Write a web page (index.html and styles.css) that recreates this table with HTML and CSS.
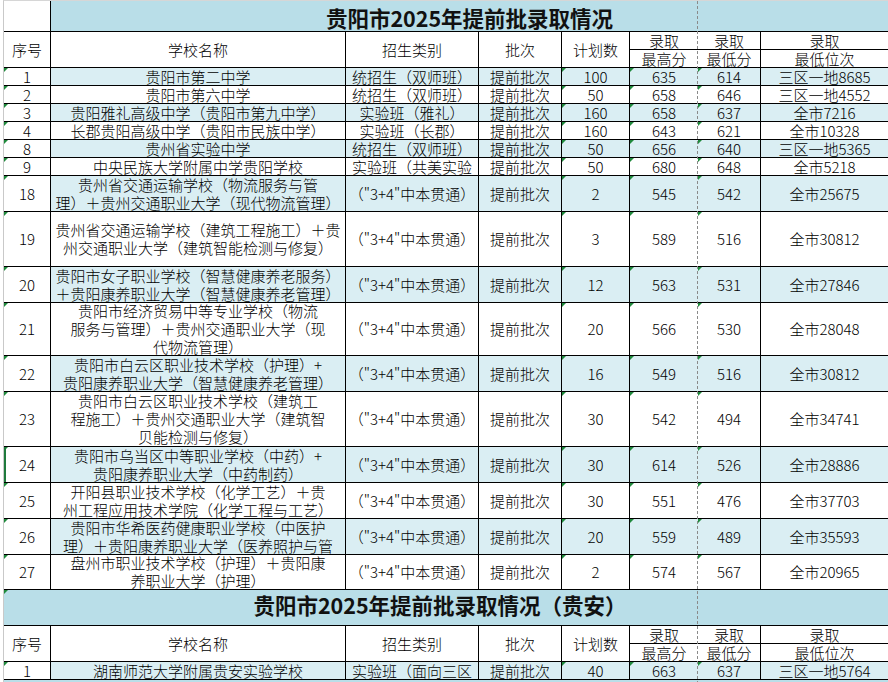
FILE: index.html
```html
<!DOCTYPE html>
<html lang="zh-CN">
<head>
<meta charset="utf-8">
<title>贵阳市2025年提前批录取情况</title>
<link rel="stylesheet" href="styles.css">
</head>
<body>
<div class="sheet">
  <div class="row">
    <div class="c n"></div>
    <div class="c title t1">贵阳市2025年提前批录取情况</div>
  </div>
  <div class="row">
    <div class="c n h2">序号</div>
    <div class="c h2">学校名称</div>
    <div class="c h2">招生类别</div>
    <div class="c h2">批次</div>
    <div class="c h2">计划数</div>
    <div class="c nr">录取</div>
    <div class="c">录取</div>
    <div class="c nr">录取</div>
    <div class="c nr">最高分</div>
    <div class="c">最低分</div>
    <div class="c nr">最低位次</div>
  </div>

  <div class="row z">
    <div class="c n t">1</div><div class="c">贵阳市第二中学</div><div class="c">统招生（双师班）</div><div class="c">提前批次</div>
    <div class="c t">100</div><div class="c t nr">635</div><div class="c t">614</div><div class="c nr">三区一地8685</div>
  </div>
  <div class="row">
    <div class="c n t">2</div><div class="c">贵阳市第六中学</div><div class="c">统招生（双师班）</div><div class="c">提前批次</div>
    <div class="c t">50</div><div class="c t nr">658</div><div class="c t">646</div><div class="c nr">三区一地4552</div>
  </div>
  <div class="row z">
    <div class="c n t">3</div><div class="c">贵阳雅礼高级中学（贵阳市第九中学）</div><div class="c">实验班（雅礼）</div><div class="c">提前批次</div>
    <div class="c t">160</div><div class="c t nr">658</div><div class="c t">637</div><div class="c nr">全市7216</div>
  </div>
  <div class="row">
    <div class="c n t">4</div><div class="c">长郡贵阳高级中学（贵阳市民族中学）</div><div class="c">实验班（长郡）</div><div class="c">提前批次</div>
    <div class="c t">160</div><div class="c t nr">643</div><div class="c t">621</div><div class="c nr">全市10328</div>
  </div>
  <div class="row z">
    <div class="c n t">8</div><div class="c">贵州省实验中学</div><div class="c">统招生（双师班）</div><div class="c">提前批次</div>
    <div class="c t">50</div><div class="c t nr">656</div><div class="c t">640</div><div class="c nr">三区一地5365</div>
  </div>
  <div class="row">
    <div class="c n t">9</div><div class="c">中央民族大学附属中学贵阳学校</div><div class="c">实验班（共美实验</div><div class="c">提前批次</div>
    <div class="c t">50</div><div class="c t nr">680</div><div class="c t">648</div><div class="c nr">全市5218</div>
  </div>
  <div class="row z">
    <div class="c n t">18</div><div class="c"><span>贵州省交通运输学校（物流服务与管<br>理）＋贵州交通职业大学（现代物流管理）</span></div><div class="c">（"3+4"中本贯通）</div><div class="c">提前批次</div>
    <div class="c t">2</div><div class="c t nr">545</div><div class="c t">542</div><div class="c nr">全市25675</div>
  </div>
  <div class="row">
    <div class="c n t">19</div><div class="c"><span>贵州省交通运输学校（建筑工程施工）＋贵<br>州交通职业大学（建筑智能检测与修复）</span></div><div class="c">（"3+4"中本贯通）</div><div class="c">提前批次</div>
    <div class="c t">3</div><div class="c t nr">589</div><div class="c t">516</div><div class="c nr">全市30812</div>
  </div>
  <div class="row z">
    <div class="c n t">20</div><div class="c"><span>贵阳市女子职业学校（智慧健康养老服务）<br>＋贵阳康养职业大学（智慧健康养老管理）</span></div><div class="c">（"3+4"中本贯通）</div><div class="c">提前批次</div>
    <div class="c t">12</div><div class="c t nr">563</div><div class="c t">531</div><div class="c nr">全市27846</div>
  </div>
  <div class="row">
    <div class="c n t">21</div><div class="c"><span>贵阳市经济贸易中等专业学校（物流<br>服务与管理）＋贵州交通职业大学（现<br>代物流管理）</span></div><div class="c">（"3+4"中本贯通）</div><div class="c">提前批次</div>
    <div class="c t">20</div><div class="c t nr">566</div><div class="c t">530</div><div class="c nr">全市28048</div>
  </div>
  <div class="row z">
    <div class="c n t">22</div><div class="c"><span>贵阳市白云区职业技术学校（护理）+<br>贵阳康养职业大学（智慧健康养老管理）</span></div><div class="c">（"3+4"中本贯通）</div><div class="c">提前批次</div>
    <div class="c t">16</div><div class="c t nr">549</div><div class="c t">516</div><div class="c nr">全市30812</div>
  </div>
  <div class="row">
    <div class="c n t">23</div><div class="c"><span>贵阳市白云区职业技术学校（建筑工<br>程施工）＋贵州交通职业大学（建筑智<br>贝能检测与修复）</span></div><div class="c">（"3+4"中本贯通）</div><div class="c">提前批次</div>
    <div class="c t">30</div><div class="c t nr">542</div><div class="c t">494</div><div class="c nr">全市34741</div>
  </div>
  <div class="row z">
    <div class="c n t sel">24</div><div class="c"><span>贵阳市乌当区中等职业学校（中药）+<br>贵阳康养职业大学（中药制药）</span></div><div class="c">（"3+4"中本贯通）</div><div class="c">提前批次</div>
    <div class="c t">30</div><div class="c t nr">614</div><div class="c t">526</div><div class="c nr">全市28886</div>
  </div>
  <div class="row">
    <div class="c n t">25</div><div class="c"><span>开阳县职业技术学校（化学工艺）＋贵<br>州工程应用技术学院（化学工程与工艺）</span></div><div class="c">（"3+4"中本贯通）</div><div class="c">提前批次</div>
    <div class="c t">30</div><div class="c t nr">551</div><div class="c t">476</div><div class="c nr">全市37703</div>
  </div>
  <div class="row z">
    <div class="c n t">26</div><div class="c"><span>贵阳市华希医药健康职业学校（中医护<br>理）＋贵阳康养职业大学（医养照护与管</span></div><div class="c">（"3+4"中本贯通）</div><div class="c">提前批次</div>
    <div class="c t">20</div><div class="c t nr">559</div><div class="c t">489</div><div class="c nr">全市35593</div>
  </div>
  <div class="row">
    <div class="c n t">27</div><div class="c"><span>盘州市职业技术学校（护理）＋贵阳康<br>养职业大学（护理）</span></div><div class="c">（"3+4"中本贯通）</div><div class="c">提前批次</div>
    <div class="c t">2</div><div class="c t nr">574</div><div class="c t">567</div><div class="c nr">全市20965</div>
  </div>

  <div class="row">
    <div class="c title t2">贵阳市2025年提前批录取情况（贵安）</div>
  </div>
  <div class="row">
    <div class="c n h2">序号</div>
    <div class="c h2">学校名称</div>
    <div class="c h2">招生类别</div>
    <div class="c h2">批次</div>
    <div class="c h2">计划数</div>
    <div class="c nr">录取</div>
    <div class="c">录取</div>
    <div class="c nr">录取</div>
    <div class="c nr">最高分</div>
    <div class="c">最低分</div>
    <div class="c nr">最低位次</div>
  </div>
  <div class="row z">
    <div class="c n t">1</div><div class="c">湖南师范大学附属贵安实验学校</div><div class="c">实验班（面向三区</div><div class="c">提前批次</div>
    <div class="c t">40</div><div class="c t nr">663</div><div class="c t">637</div><div class="c nr">三区一地5764</div>
  </div>
  <div class="tail"></div>

  <div class="pagebreak"></div>
</div>
</body>
</html>
```

FILE: styles.css
```css
html, body {
  margin: 0;
  padding: 0;
  overflow: hidden;
  background: #ffffff;
}

body {
  font-family: "Noto Sans CJK SC", "Noto Sans", sans-serif;
  font-size: 15px;
  font-weight: 300;
  color: #000;
}

.sheet {
  position: relative;
  display: grid;
  grid-template-columns: 47px 295px 133px 83px 68px 68px 63px 127px;
  grid-template-rows:
    31px 18px 18px
    18px 18px 18px 18px 18px 18px
    36px 55px 36px 53px 36px 55px 36px 36px 36px 35px
    36px 18px 18px 18px 18px;
  margin-left: 3px;
  border-left: 1px solid #c9c9c9;
  border-top: 1px solid #d6d6d6;
}

.row {
  display: contents;
}

.c {
  position: relative;
  box-sizing: border-box;
  display: flex;
  align-items: center;
  justify-content: center;
  text-align: center;
  white-space: nowrap;
  line-height: 18px;
  padding: 0 2px;
  border-right: 1px solid #000;
  border-bottom: 1px solid #000;
  background: #fff;
}

.c.nr {
  border-right: none;
}

.h2 {
  grid-row: span 2;
}

.z > .c {
  background: #daeef3;
}

.z > .c.n {
  background: #fff;
}

.title {
  background: #b9dee8;
  font-weight: 700;
  font-size: 21.5px;
  border-right: none;
  color: #111;
}

.t1 {
  grid-column: 2 / -1;
  padding-top: 4px;
}

.t2 {
  grid-column: 1 / -1;
  padding-bottom: 5px;
  padding-right: 14px;
}

.t::before,
.t2::before {
  content: "";
  position: absolute;
  left: 0;
  top: 0;
  border-top: 4px solid #1f8a3c;
  border-right: 4px solid transparent;
}

.sel::after {
  content: "";
  position: absolute;
  left: 0;
  top: 0;
  bottom: 0;
  width: 2px;
  background: #1f7a3c;
}

.tail {
  grid-column: 1 / -1;
  background: #b9dee8;
}

.pagebreak {
  position: absolute;
  left: 693px;
  top: 0;
  bottom: 0;
  width: 1px;
  background: repeating-linear-gradient(to bottom, #8a8a8a 0 3px, transparent 3px 5px);
  z-index: 2;
}
```
